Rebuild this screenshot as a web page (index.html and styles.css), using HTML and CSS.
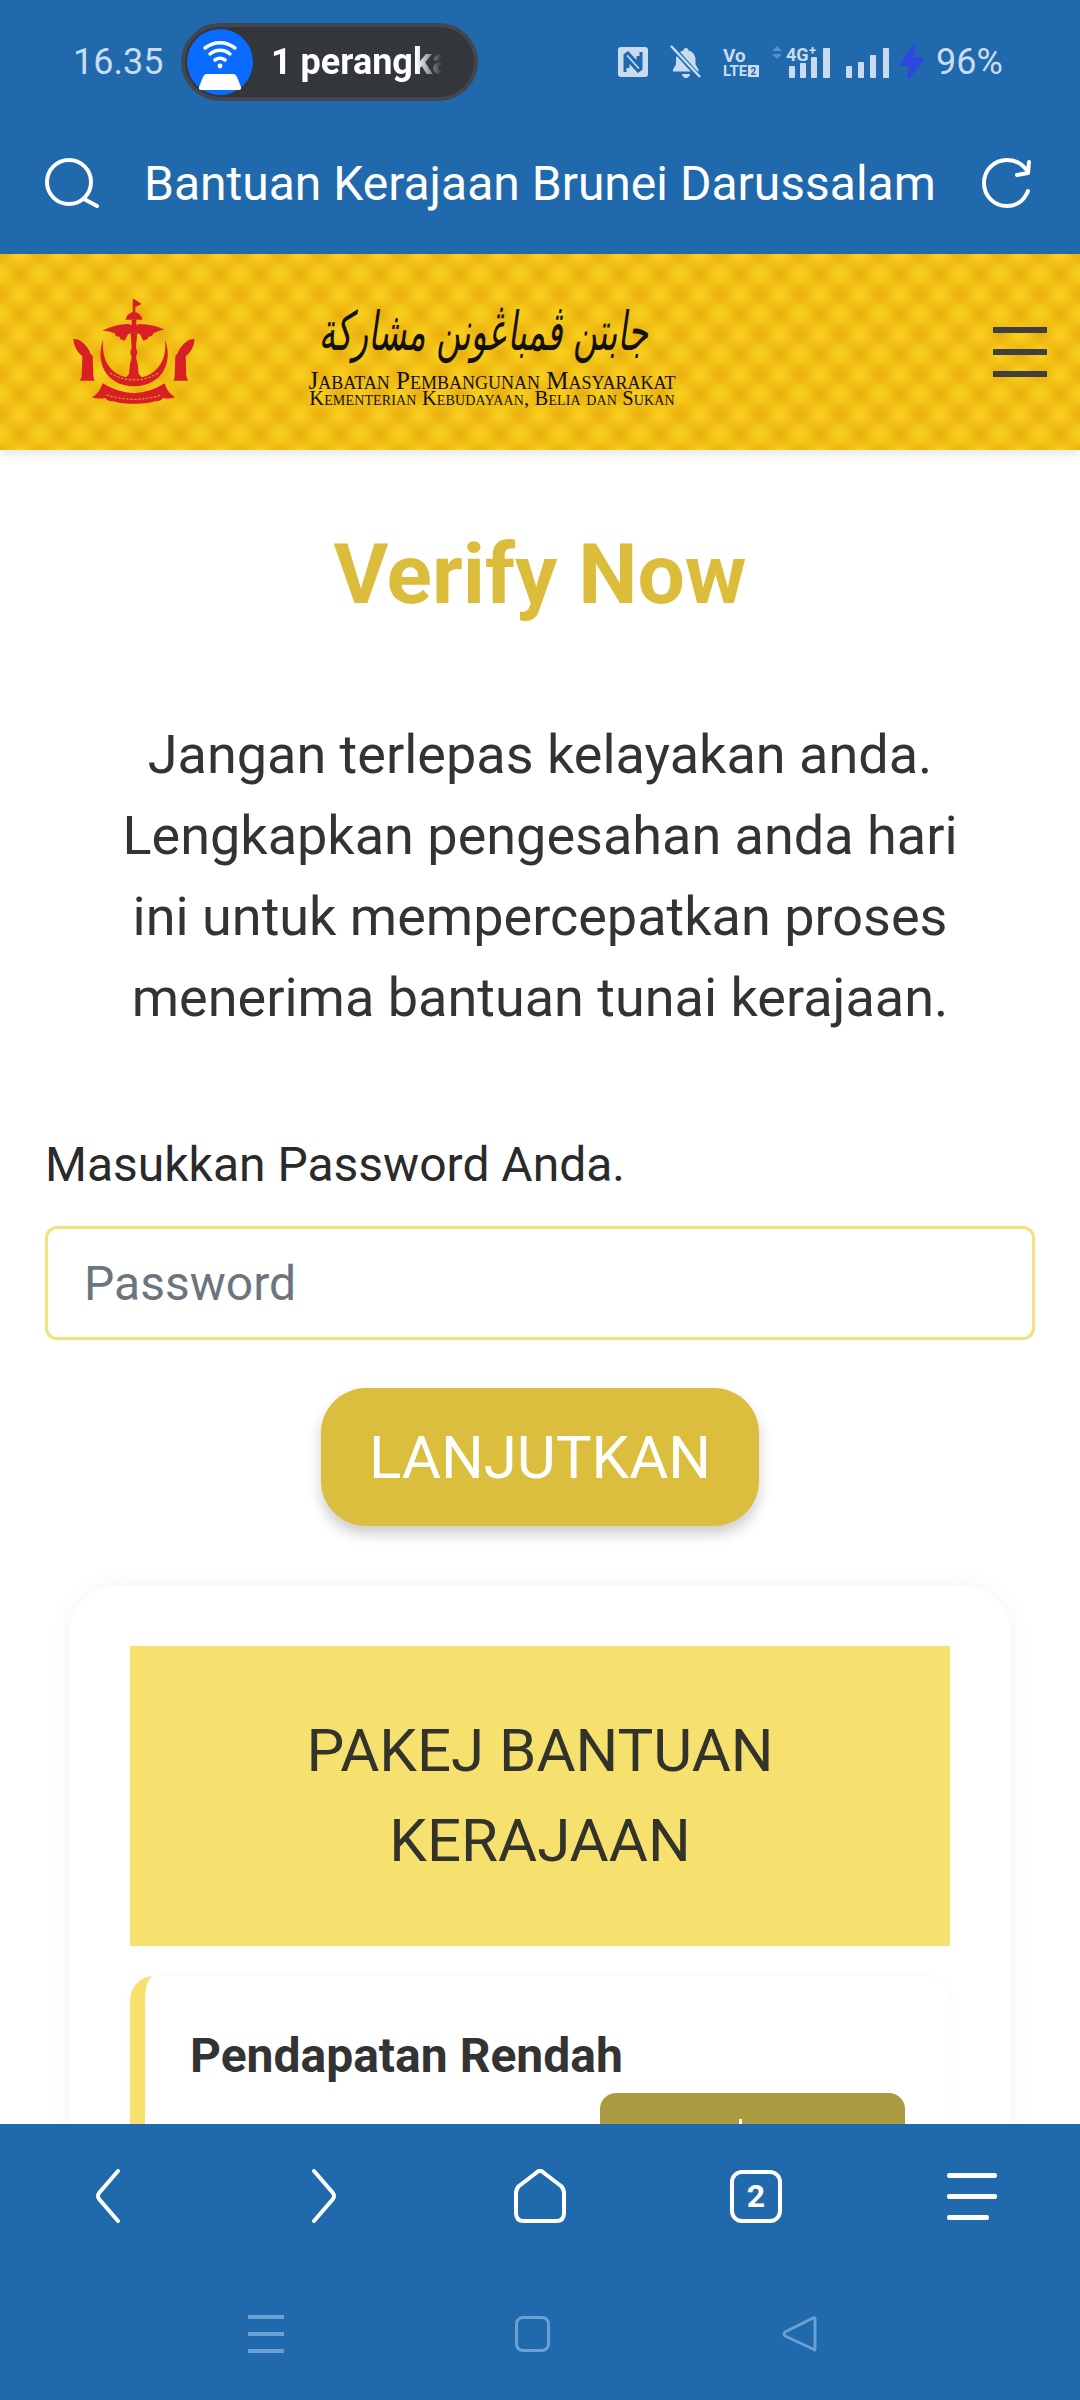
FILE: index.html
```html
<!DOCTYPE html>
<html lang="en">
<head>
   <title>Bantuan Kerajaan Brunei Darussalam</title>
   <link rel="stylesheet" href="styles.css">
</head>
<body>
   <div class="app-top">
      <div class="status-bar">
         <span class="time">16.35</span>
         <div class="hotspot">
            <span class="hotspot-icon">
               <svg width="66" height="66" viewBox="0 0 66 66" fill="none" stroke="#fff" stroke-linecap="round">
                  <path d="M18 19c9-7 21-7 30 0" stroke-width="3.500"/>
                  <path d="M23 25c6-5 14-5 20 0" stroke-width="3.500"/>
                  <path d="M28 31c3-2 7-2 10 0" stroke-width="3.500"/>
                  <circle cx="33" cy="37" r="2.400" fill="#fff" stroke="none"/>
                  <path d="M20 45h26c2 0 3 1 4 3l4 10c.5 2-.5 3-2 3H14c-1.500 0-2.500-1-2-3l4-10c1-2 2-3 4-3z" fill="#fff" stroke="none"/>
               </svg>
            </span>
            <span class="hotspot-text">1 perangka</span>
         </div>
         <div class="status-icons">
            <svg width="30" height="30" viewBox="0 0 30 30">
               <rect width="30" height="30" rx="3" fill="#c9dcef"/>
               <path d="M7 25V8l3-2 10 11V9M23 5v17l-3 2L10 13v8" fill="none" stroke="#2169ad" stroke-width="3"/>
            </svg>
            <svg class="bell" width="32" height="34" viewBox="0 0 32 34">
               <path d="M16 3c1.500 0 2.500 1 2.500 2.500 4.500 1 7 5 7 9v5l3 5v2H3v-2l3-5v-5c0-4 3-8 7.500-9C13.500 4 14.500 3 16 3zM12 29h8c0 2-2 4-4 4s-4-2-4-4z" fill="#c9dcef"/>
               <path d="M2 2l28 31" stroke="#2169ad" stroke-width="5"/>
               <path d="M1 1l29 31" stroke="#c9dcef" stroke-width="2.500"/>
            </svg>
            <svg class="volte" width="36" height="30" viewBox="0 0 36 30">
               <text x="0" y="15" class="volte-vo">Vo</text>
               <text x="0" y="29" class="volte-lte">LTE</text>
               <rect x="25" y="18" width="11" height="12" fill="#c9dcef"/>
               <text x="27.500" y="28" class="volte-two">2</text>
            </svg>
            <svg class="signal-one" width="60" height="32" viewBox="0 0 60 32">
               <path d="M5 0l5 5H0zM5 13L0 8h10z" fill="#5a90c4"/>
               <text x="14" y="15" class="net-label">4G</text>
               <text x="37" y="9" class="net-plus">+</text>
               <rect x="17" y="20" width="6" height="12" rx="1" fill="#c9dcef"/>
               <rect x="28" y="17" width="6" height="15" rx="1" fill="#c9dcef"/>
               <rect x="39" y="11" width="6" height="21" rx="1" fill="#c9dcef"/>
               <rect x="51" y="2" width="7" height="30" rx="1" fill="#c9dcef"/>
            </svg>
            <svg class="signal-two" width="43" height="32" viewBox="0 0 43 32" fill="#c9dcef">
               <rect x="0" y="20" width="6" height="12" rx="1"/>
               <rect x="12" y="16" width="6" height="16" rx="1"/>
               <rect x="24" y="9" width="6" height="23" rx="1"/>
               <rect x="37" y="2" width="6" height="30" rx="1"/>
            </svg>
            <svg class="bolt" width="24" height="34" viewBox="0 0 24 34">
               <path d="M13 0h3l-2 12h9l1 2-14 19-3 1 2-13H1l-1-2z" fill="#2d48e0"/>
            </svg>
            <span class="battery">96%</span>
         </div>
      </div>
      <div class="title-bar">
         <svg width="54" height="50" viewBox="0 0 54 50" fill="none" stroke="#fff" stroke-width="4" stroke-linecap="round">
            <circle cx="24" cy="24" r="22"/>
            <path d="M39 41l13 7"/>
         </svg>
         <span class="page-title">Bantuan Kerajaan Brunei Darussalam</span>
         <svg width="50" height="50" viewBox="0 0 50 50" fill="none" stroke="#fff" stroke-width="4" stroke-linecap="round" stroke-linejoin="round">
            <path d="M46 33C42 43 34 48 25 48 12 48 2 38 2 25S12 2 25 2c9 0 16 4 21 12"/>
            <path d="M47 4l-1 11-11 2"/>
         </svg>
      </div>
   </div>

   <main class="page">
      <header class="banner">
         <!-- emblem -->
         <svg class="emblem" width="122" height="106" viewBox="39 30 366 318" fill="#d81f26">
            <path d="M218 30h4l23 15-19 10v15h-8z"/>
            <path d="M197 92q3-20 25-24 22 4 25 24z"/>
            <path d="M215 92h14v20h-14z"/>
            <path d="M127 125Q165 106 205 105L222 110 238 105Q280 106 313 122 292 125 280 133L276 141 266 143 262 151 250 155 240 136 222 130 204 136 194 155 182 151 178 143 168 141 164 133Q150 126 127 125z"/>
            <path d="M212 130H232L228 175 232 190 228 205 233 225 236 255 248 268H196L207 255 210 225 215 205 211 190 215 175z"/>
            <path d="M130 152c-25 63 5 138 92 140 88-2 118-77 93-140 7 63-25 113-93 116-67-3-100-53-92-116z"/>
            <path id="hand" d="M40 150q15-2 25 8 20 15 27 37l6 5 2 62 3 13H60l5-13 2-60q-25-20-27-52z"/>
            <use href="#hand" transform="matrix(-1 0 0 1 444 0)"/>
            <path d="M95 325q18-8 28-30l5-12q45 28 94 30 50-2 92-30 6 26 31 42-18 6-35 2-10 12-20 9-33 10-68 8-37 2-66-8-12 4-20-9-20 4-41-2z"/>
            <path d="M150 252q72 42 145 0M140 318q82 26 165 0" fill="none" stroke="#efbd1e" stroke-width="3" stroke-dasharray="7 5"/>
         </svg>
         <div class="agency">
            <div class="agency-jawi" lang="ms-Arab" dir="rtl">جابتن ڤمباڠونن مشارکة</div>
            <div class="agency-name">Jabatan Pembangunan Masyarakat</div>
            <div class="agency-sub">Kementerian Kebudayaan, Belia dan Sukan</div>
         </div>
         <div class="burger"><span></span><span></span><span></span></div>
      </header>

      <section class="verify">
         <h1>Verify Now</h1>
         <p class="lead">Jangan terlepas kelayakan anda. Lengkapkan pengesahan anda hari ini untuk mempercepatkan proses menerima bantuan tunai kerajaan.</p>
         <label class="field-label" for="pw">Masukkan Password Anda.</label>
         <input class="field" id="pw" type="password" placeholder="Password">
         <button class="btn-next">LANJUTKAN</button>
      </section>

      <section class="package-card">
         <h2 class="package-head">PAKEJ BANTUAN KERAJAAN</h2>
         <div class="package-item">
            <h3>Pendapatan Rendah</h3>
            <div class="package-btn"><span class="package-tick"></span></div>
         </div>
      </section>
   </main>

   <footer class="app-bottom">
      <nav class="browser-nav">
         <span class="nav-cell">
            <svg width="26" height="54" viewBox="0 0 26 54" fill="none" stroke="#fff" stroke-width="4" stroke-linecap="round" stroke-linejoin="round"><path d="M23 2L4 24q-2 3 0 6l19 22"/></svg>
         </span>
         <span class="nav-cell">
            <svg width="26" height="54" viewBox="0 0 26 54" fill="none" stroke="#fff" stroke-width="4" stroke-linecap="round" stroke-linejoin="round"><path d="M3 2l19 22q2 3 0 6L3 52"/></svg>
         </span>
         <span class="nav-cell">
            <svg width="52" height="54" viewBox="0 0 52 54" fill="none" stroke="#fff" stroke-width="4" stroke-linejoin="round"><path d="M22 4q4-4 8 0l17 13q3 3 3 7v20q0 8-8 8H10q-8 0-8-8V24q0-4 3-7z"/></svg>
         </span>
         <span class="nav-cell">
            <span class="tab-count">2</span>
         </span>
         <span class="nav-cell">
            <span class="nav-menu"><i></i><i></i><i class="short"></i></span>
         </span>
      </nav>
      <nav class="system-nav">
         <span class="sys-cell">
            <span class="sys-menu"><i></i><i></i><i></i></span>
         </span>
         <span class="sys-cell">
            <span class="sys-square"></span>
         </span>
         <span class="sys-cell">
            <svg width="36" height="36" viewBox="0 0 36 36" fill="none" stroke="#6aa0d2" stroke-width="3" stroke-linejoin="round"><path d="M33 3v30q0 2-2 0L3 20q-2-2 0-4L31 2q2-1 2 1z"/></svg>
         </span>
      </nav>
   </footer>
</body>
</html>
```

FILE: styles.css
```css
* {
    margin: 0;
    padding: 0;
    box-sizing: border-box;
}
html, body {
    width: 1080px;
    height: 2400px;
    overflow: hidden;
}
body {
    display: flex;
    flex-direction: column;
    font-family: Roboto, "Noto Sans", sans-serif;
    color: #333;
    background: #fff;
}

/* top chrome */
.app-top {
    height: 254px;
    background: #2169ad;
    flex-shrink: 0;
}
.status-bar {
    height: 124px;
    display: flex;
    align-items: center;
    padding-left: 73px;
    color: #c9dcef;
    font-size: 36px;
}
.time {
    width: 108px;
    flex-shrink: 0;
}
.hotspot {
    width: 297px;
    height: 78px;
    border: 4px solid #42474f;
    border-radius: 39px;
    background: #33363b;
    display: flex;
    align-items: center;
    padding-left: 2px;
    flex-shrink: 0;
}
.hotspot-icon {
    width: 66px;
    height: 66px;
    border-radius: 50%;
    background: #0a6cff;
    flex-shrink: 0;
}
.hotspot-text {
    margin-left: 18px;
    width: 171px;
    font-weight: 700;
    white-space: nowrap;
    overflow: hidden;
    color: #fff;
    mask-image: linear-gradient(90deg, #000 85%, transparent 100%);
    -webkit-mask-image: linear-gradient(90deg, #000 85%, transparent 100%);
}
.status-icons {
    margin-left: 140px;
    display: flex;
    align-items: center;
}
.bell {
    margin-left: 22px;
}
.volte {
    margin-left: 21px;
}
.signal-one {
    margin-left: 13px;
}
.signal-two {
    margin-left: 14px;
}
.bolt {
    margin-left: 11px;
}
.battery {
    margin-left: 12px;
}
.volte-vo, .volte-lte, .volte-two, .net-label, .net-plus {
    font-family: Roboto, sans-serif;
    font-weight: 700;
    fill: #c9dcef;
}
.volte-vo {
    font-size: 19px;
}
.volte-lte {
    font-size: 15px;
}
.volte-two {
    font-size: 10px;
    fill: #2169ad;
}
.net-label {
    font-size: 18px;
}
.net-plus {
    font-size: 13px;
}
.title-bar {
    height: 118px;
    display: flex;
    align-items: center;
    padding: 0 48px 0 45px;
    color: #fff;
}
.page-title {
    flex: 1;
    margin-left: 45px;
    font-size: 48px;
    white-space: nowrap;
}

/* yellow banner */
.page {
    flex: 1;
    overflow: hidden;
    min-height: 0;
}
.banner {
    position: relative;
    height: 196px;
    display: flex;
    align-items: center;
    padding-left: 73px;
    background-color: #f1be14;
    background-image:
        radial-gradient(circle, rgba(226, 160, 10, .55) 0, rgba(226, 160, 10, 0) 10px),
        radial-gradient(circle, rgba(226, 160, 10, .55) 0, rgba(226, 160, 10, 0) 10px),
        radial-gradient(circle, rgba(250, 212, 34, .7) 0 3px, rgba(250, 212, 34, 0) 12px),
        radial-gradient(circle, rgba(250, 212, 34, .7) 0 3px, rgba(250, 212, 34, 0) 12px);
    background-size: 40px 40px;
    background-position: 0 0, 20px 20px, 20px 0, 0 20px;
    box-shadow: 0 4px 10px rgba(0, 0, 0, .1);
}
.emblem {
    flex-shrink: 0;
}
.agency {
    width: 374px;
    margin-left: 110px;
    margin-top: 6px;
    color: #14110a;
    font-family: "Liberation Serif", serif;
    font-variant: small-caps;
    text-align: center;
    line-height: 1;
}
.agency-jawi {
    height: 44px;
    margin: 6px 0 18px;
    font-family: "DejaVu Sans", serif;
    font-variant: normal;
    font-size: 36px;
    line-height: 44px;
    transform: translateX(-6px) skewX(-8deg) scale(.92, 1.5);
    white-space: nowrap;
}
.agency-name {
    font-size: 25px;
    line-height: 18px;
    white-space: nowrap;
}
.agency-sub {
    font-size: 20.500px;
    line-height: 16px;
    letter-spacing: .15px;
    white-space: nowrap;
}
.burger {
    margin-left: auto;
    margin-right: 33px;
    width: 54px;
    display: flex;
    flex-direction: column;
    gap: 16px;
}
.burger span {
    height: 6px;
    background: #3f3f3f;
}

/* verify form */
.verify {
    padding: 77px 45px 0;
    display: flex;
    flex-direction: column;
}
.verify h1 {
    text-align: center;
    font-size: 84px;
    line-height: 96px;
    font-weight: 700;
    color: #dcbd3b;
}
.lead {
    margin: 91px 55px 0;
    text-align: center;
    font-size: 54px;
    line-height: 81px;
}
.field-label {
    margin-top: 91px;
    font-size: 48px;
    line-height: 72px;
    color: #2a2a2a;
    height: 72px;
}
.field {
    margin-top: 25px;
    height: 114px;
    border: 3px solid #f5e07a;
    border-radius: 12px;
    padding: 0 36px;
    font-family: Roboto, sans-serif;
    font-size: 48px;
    background: #fff;
}
.field::placeholder {
    color: #6c757d;
    opacity: 1;
}
.btn-next {
    margin: 48px auto 0;
    width: 438px;
    height: 138px;
    border: none;
    border-radius: 45px;
    background: #dbbe3d;
    color: #fff;
    font-family: Roboto, sans-serif;
    font-size: 60px;
    box-shadow: 0 8px 14px rgba(0, 0, 0, .2);
}

/* package card */
.package-card {
    margin: 60px 70px 0;
    padding: 60px;
    border-radius: 45px;
    background: #fff;
    box-shadow: 0 0 24px rgba(0, 0, 0, .05);
}
.package-head {
    height: 300px;
    padding: 60px 50px 0;
    background: #f6e16f;
    text-align: center;
    font-size: 60px;
    line-height: 90px;
    font-weight: 400;
    color: #33332b;
}
.package-item {
    margin-top: 30px;
    height: 260px;
    padding: 50px 45px 0 45px;
    border-left: 15px solid #f6e16f;
    border-radius: 24px;
    box-shadow: 0 0 8px rgba(0, 0, 0, .03);
}
.package-item h3 {
    font-size: 48px;
    line-height: 60px;
    font-weight: 700;
    color: #333;
}
.package-btn {
    margin: 7px 0 0 auto;
    width: 305px;
    height: 90px;
    border-radius: 16px;
    background: #ab9a3f;
    display: flex;
    justify-content: center;
}
.package-tick {
    margin: 26px 0 0 -24px;
    width: 3px;
    height: 12px;
    background: #fff;
}

/* bottom chrome */
.app-bottom {
    height: 276px;
    background: #2169ad;
    flex-shrink: 0;
    position: relative;
}
.browser-nav {
    display: grid;
    grid-template-columns: repeat(5, 216px);
    padding-top: 45px;
}
.nav-cell {
    height: 54px;
    display: flex;
    align-items: center;
    justify-content: center;
}
.tab-count {
    width: 52px;
    height: 53px;
    border: 4px solid #fff;
    border-radius: 12px;
    color: #fff;
    font-size: 32px;
    font-weight: 700;
    display: flex;
    align-items: center;
    justify-content: center;
}
.nav-menu {
    width: 50px;
    display: flex;
    flex-direction: column;
    gap: 16px;
}
.nav-menu i {
    display: block;
    height: 5px;
    border-radius: 2px;
    background: #fff;
}
.nav-menu .short {
    width: 42px;
}
.system-nav {
    display: grid;
    grid-template-columns: repeat(3, 267px);
    padding: 93px 0 0 132px;
}
.sys-cell {
    height: 36px;
    display: flex;
    align-items: center;
    justify-content: center;
}
.sys-menu {
    width: 36px;
    display: flex;
    flex-direction: column;
    gap: 13px;
}
.sys-menu i {
    display: block;
    height: 4px;
    background: #6aa0d2;
}
.sys-square {
    width: 35px;
    height: 36px;
    border: 3px solid #6aa0d2;
    border-radius: 8px;
}
```
